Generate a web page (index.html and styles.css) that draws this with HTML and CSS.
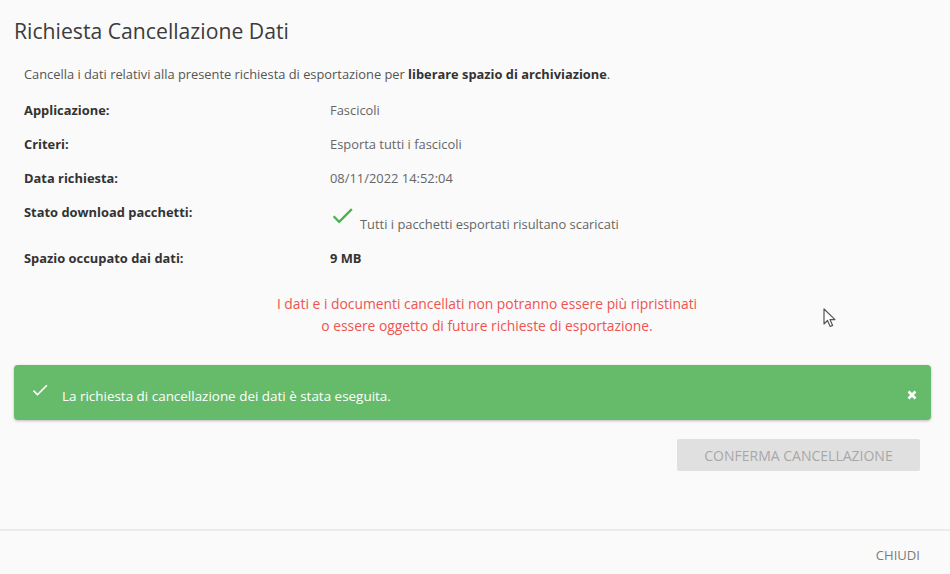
FILE: index.html
```html
<!DOCTYPE html>
<html lang="it">
<head>
<meta charset="utf-8">
<title>Richiesta Cancellazione Dati</title>
<link rel="stylesheet" href="styles.css">
</head>
<body>
<div class="dialog">
  <div class="content">
    <h1 class="title">Richiesta Cancellazione Dati</h1>
    <p class="desc">Cancella i dati relativi alla presente richiesta di esportazione per <strong>liberare spazio di archiviazione</strong>.</p>
    <div class="details">
      <div class="row"><div class="label">Applicazione:</div><div class="value">Fascicoli</div></div>
      <div class="row"><div class="label">Criteri:</div><div class="value">Esporta tutti i fascicoli</div></div>
      <div class="row"><div class="label">Data richiesta:</div><div class="value">08/11/2022 14:52:04</div></div>
      <div class="row"><div class="label">Stato download pacchetti:</div>
        <div class="value status">
          <svg class="ok-icon" viewBox="0 0 24 24"><path d="M9 16.17L4.83 12l-1.42 1.41L9 19 21 7l-1.41-1.41z"/></svg>
          <span class="status-text">Tutti i pacchetti esportati risultano scaricati</span>
        </div>
      </div>
      <div class="row"><div class="label">Spazio occupato dai dati:</div><div class="value strong">9 MB</div></div>
    </div>
    <div class="warning">I dati e i documenti cancellati non potranno essere più ripristinati<br>o essere oggetto di future richieste di esportazione.</div>
    <div class="alert">
      <svg class="alert-icon" viewBox="0 0 24 24"><path d="M9 16.17L4.83 12l-1.42 1.41L9 19 21 7l-1.41-1.41z"/></svg>
      <span class="alert-text">La richiesta di cancellazione dei dati è stata eseguita.</span>
      <svg class="alert-close" viewBox="0 0 10 10"><path d="M1.5 1.5L8.5 8.5M8.5 1.5L1.5 8.5"/></svg>
    </div>
    <div class="actions">
      <button class="btn-disabled" disabled>CONFERMA CANCELLAZIONE</button>
    </div>
  </div>
  <div class="footer">
    <button class="btn-text">CHIUDI</button>
  </div>
</div>
<svg class="cursor" viewBox="0 0 13 20"><path d="M1 1L1 16L4.5 12.5L7.2 18.5L9.6 17.4L7 11.6L12 11.6Z"/></svg>
</body>
</html>
```
FILE: styles.css
```css
* { box-sizing: border-box; }
html, body {
  margin: 0;
  padding: 0;
  height: 100%;
  background: #fafafa;
}
body {
  font-family: "Open Sans", "Noto Sans", sans-serif;
  color: #555;
  position: relative;
  overflow: hidden;
}
.dialog {
  height: 574px;
  display: flex;
  flex-direction: column;
}
.content {
  flex: 1;
  padding: 17px 19px 0 14px;
}
.title {
  margin: 0;
  font-size: 21.2px;
  line-height: 28px;
  font-weight: 400;
  color: #3c3c3c;
}
.desc {
  margin: 19px 0 0 10px;
  font-size: 12.85px;
  line-height: 20px;
  color: #555;
}
.desc strong { color: #333; font-weight: 700; }
.details {
  margin: 9px 0 0 10px;
}
.row {
  display: grid;
  grid-template-columns: 306px 1fr;
  padding: 7px 0;
  font-size: 12.9px;
  line-height: 20px;
}
.label { font-weight: 700; color: #333; }
.value { color: #666; }
.value.strong { font-weight: 700; color: #333; }
.status {
  display: flex;
  align-items: flex-start;
  margin-left: -1px;
}
.ok-icon {
  width: 27px;
  height: 27px;
  fill: #4caf50;
  flex: none;
}
.status-text {
  margin-top: 12px;
  margin-left: 4px;
}
.warning {
  margin: 18px 0 0 29px;
  text-align: center;
  color: #ef5350;
  font-size: 13.85px;
  line-height: 22px;
}
.alert {
  margin-top: 28px;
  height: 55px;
  background: #66bb6a;
  border-radius: 4px;
  box-shadow: 0 1px 3px rgba(0,0,0,0.25);
  display: flex;
  align-items: flex-start;
  padding: 15px 14px 0 16px;
  color: #fff;
}
.alert-icon {
  width: 20px;
  height: 20px;
  fill: #fff;
  flex: none;
}
.alert-text {
  margin: 6px 0 0 12px;
  font-size: 13.45px;
  line-height: 20px;
  flex: 1;
}
.alert-close {
  width: 10px;
  height: 10px;
  margin-top: 10px;
  stroke: #fff;
  stroke-width: 2.6;
  fill: none;
  flex: none;
}
.actions {
  display: flex;
  justify-content: flex-end;
  margin-top: 19px;
  padding-right: 11px;
}
.btn-disabled {
  width: 243px;
  height: 32px;
  border: none;
  background: #e0e0e0;
  color: #a8a8a8;
  font-family: inherit;
  font-size: 14px;
  border-radius: 2px;
  padding: 0;
}
.footer {
  height: 45px;
  border-top: 2px solid #ececec;
  display: flex;
  justify-content: flex-end;
  align-items: center;
  padding-right: 30px;
}
.btn-text {
  border: none;
  background: none;
  color: #7a7a7a;
  font-family: inherit;
  font-size: 13.1px;
  padding: 0;
  margin-top: 4px;
}
.cursor {
  position: absolute;
  left: 823px;
  top: 308px;
  width: 13px;
  height: 20px;
  fill: #fff;
  stroke: #555;
  stroke-width: 1.2;
  stroke-linejoin: round;
}
```
